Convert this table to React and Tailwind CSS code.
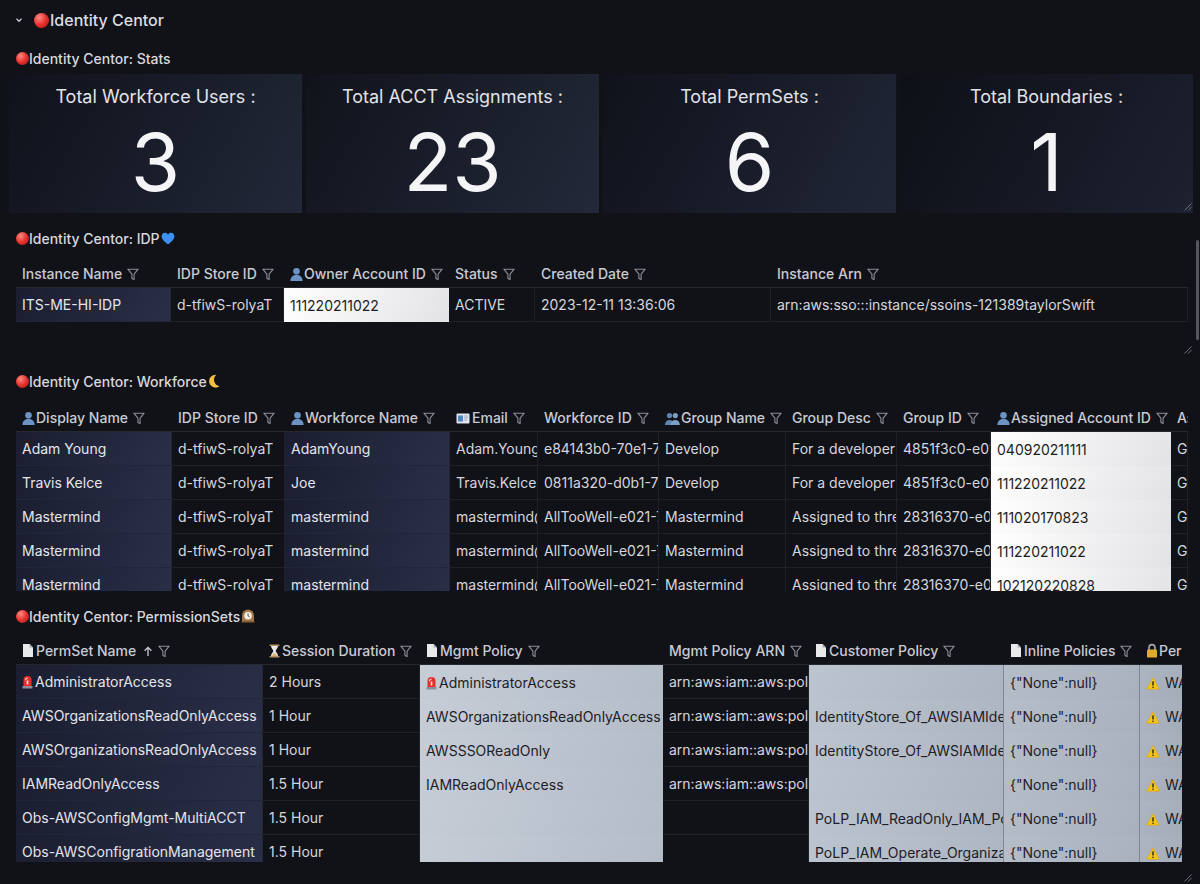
import React from "react";

const tone = {
  dark: "text-[#d5d6de] border-r border-b border-[#1f2127]",
  navy: "bg-linear-120 from-[#1b1e30] to-[#2a2f48] text-[#e4e5eb] border-r border-b border-[#22263a]",
  white: "bg-linear-120 from-[#ffffff] to-[#e3e3e6] text-[#1c1d21]",
  grayA: "bg-linear-120 from-[#c6cdd7] to-[#b4bcc8] text-[#1f2025]",
  grayB: "bg-linear-120 from-[#bcc4cf] to-[#adb5c2] text-[#1f2025] border-r border-[#7f8794]",
  grayC: "bg-linear-120 from-[#b5bdc9] to-[#a9b1be] text-[#1f2025] border-r border-[#7f8794]",
  grayD: "bg-linear-120 from-[#adb5c1] to-[#a3acb9] text-[#1f2025]",
};

function RedDot({ size = "w-[13px] h-[13px]" }) {
  return (
    <span
      className={
        size +
        " inline-block shrink-0 rounded-full bg-radial-[at_35%_30%] from-[#ff8a80] via-[#e5322d] to-[#a3100f]"
      }
    />
  );
}

function Funnel() {
  return (
    <svg width="12" height="13" viewBox="0 0 12 13" className="inline-block ml-[5px] align-[-2px]">
      <path
        d="M0.8 1.2h10.4L7.1 6.2v5.4L4.9 10.5V6.2z"
        fill="none"
        stroke="#8c8d98"
        strokeWidth="1.1"
        strokeLinejoin="round"
      />
    </svg>
  );
}

function Person({ c = "#6b93c4" }) {
  return (
    <svg width="13" height="14" viewBox="0 0 13 14" className="inline-block mr-[1px] align-[-2px]">
      <circle cx="6.5" cy="4.2" r="3.3" fill={c} />
      <path d="M0.4 14c0-3.9 2.7-6.2 6.1-6.2s6.1 2.3 6.1 6.2z" fill={c} />
    </svg>
  );
}

function People() {
  return (
    <svg width="15" height="13" viewBox="0 0 15 13" className="inline-block mr-[1px] align-[-2px]">
      <circle cx="4.5" cy="3.6" r="2.6" fill="#5d86b3" />
      <path d="M0 13c0-3.2 2-5 4.5-5S9 9.8 9 13z" fill="#5d86b3" />
      <circle cx="10.3" cy="3.6" r="2.6" fill="#7aa0c8" />
      <path d="M5.8 13c0-3.2 2-5 4.5-5s4.5 1.8 4.5 5z" fill="#7aa0c8" />
    </svg>
  );
}

function Mail() {
  return (
    <svg width="14" height="11" viewBox="0 0 14 11" className="inline-block mr-[2px] align-[-1px]">
      <rect x="0.5" y="0.5" width="13" height="10" rx="1" fill="#dfe6ee" />
      <rect x="2" y="2.5" width="5" height="6" fill="#4f86c6" />
      <path d="M8 3h4M8 5h4M8 7h3" stroke="#8c9bb0" strokeWidth="0.8" />
    </svg>
  );
}

function Doc() {
  return (
    <svg width="12" height="15" viewBox="0 0 12 15" className="inline-block mr-[2px] align-[-2px]">
      <path d="M1 1h6.6L11 4.4V14H1z" fill="#e9e9ec" />
      <path d="M7.6 1v3.4H11z" fill="#a9a9b0" />
    </svg>
  );
}

function Hourglass() {
  return (
    <svg width="11" height="14" viewBox="0 0 11 14" className="inline-block mr-[2px] align-[-2px]">
      <rect x="0.5" y="0.5" width="10" height="1.6" rx="0.5" fill="#b49060" />
      <rect x="0.5" y="11.9" width="10" height="1.6" rx="0.5" fill="#b49060" />
      <path d="M2 2.1h7c0 2.4-2.3 3.6-2.3 4.9S9 9.5 9 11.9H2c0-2.4 2.3-3.6 2.3-4.9S2 4.5 2 2.1z" fill="#e8e8ea" />
      <path d="M3.2 11.9c0-1.4 1.4-2.4 2.3-2.9.9.5 2.3 1.5 2.3 2.9z" fill="#d9b36a" />
    </svg>
  );
}

function Siren() {
  return (
    <svg width="11" height="14" viewBox="0 0 11 14" className="inline-block mr-[2px] align-[-2px]">
      <rect x="0.5" y="11" width="10" height="2.6" rx="0.6" fill="#8a8f99" />
      <path d="M1.5 11V5a4 4 0 0 1 8 0v6z" fill="#e0312b" />
      <path d="M3.5 5.2a2 2 0 0 1 2-2" stroke="#ffd0cc" strokeWidth="1.2" fill="none" />
      <rect x="4.7" y="5.5" width="1.6" height="4" fill="#ffe3e0" />
    </svg>
  );
}

function Warn() {
  return (
    <svg width="14" height="13" viewBox="0 0 14 13" className="inline-block mr-[5px] align-[-2px]">
      <path d="M7 0.8L13.4 12.2H0.6z" fill="#f6c417" stroke="#d9a50c" strokeWidth="0.6" strokeLinejoin="round" />
      <rect x="6.3" y="4.2" width="1.4" height="4.4" rx="0.6" fill="#222" />
      <circle cx="7" cy="10.3" r="0.8" fill="#222" />
    </svg>
  );
}

function Lock() {
  return (
    <svg width="12" height="15" viewBox="0 0 12 15" className="inline-block mr-[1px] align-[-2px]">
      <path d="M3 7V4.6a3 3 0 0 1 6 0V7" fill="none" stroke="#a7a9b0" strokeWidth="1.6" />
      <rect x="1" y="6.6" width="10" height="8" rx="1.2" fill="#e0aa2a" />
    </svg>
  );
}

function Heart() {
  return (
    <svg width="14" height="13" viewBox="0 0 14 13" className="inline-block ml-[1px] align-[-2px]">
      <path d="M7 12.4C2.8 9.2 0.6 7 0.6 4.2 0.6 2.2 2.1 0.7 4 0.7c1.3 0 2.3.7 3 1.7.7-1 1.7-1.7 3-1.7 1.9 0 3.4 1.5 3.4 3.5 0 2.8-2.2 5-6.4 8.2z" fill="#3d8ff0" />
    </svg>
  );
}

function Moon() {
  return (
    <svg width="12" height="14" viewBox="0 0 12 14" className="inline-block ml-[1px] align-[-2px]">
      <path d="M8.2 0.8a6.4 6.4 0 1 0 3.3 11.4A6.6 6.6 0 0 1 8.2 0.8z" fill="#f3c03f" />
    </svg>
  );
}

function Clock() {
  return (
    <svg width="14" height="14" viewBox="0 0 14 14" className="inline-block ml-[1px] align-[-2px]">
      <path d="M1 13V6.5a6 6 0 0 1 12 0V13z" fill="#a5784a" />
      <circle cx="7" cy="6.8" r="3.8" fill="#f3efe6" />
      <path d="M7 4.5v2.4l1.6 1" stroke="#333" strokeWidth="0.8" fill="none" />
      <rect x="0.5" y="12" width="13" height="1.6" fill="#7d5733" />
    </svg>
  );
}

function SortUp() {
  return (
    <svg width="10" height="11" viewBox="0 0 10 11" className="inline-block ml-[7px] align-[-1px]">
      <path d="M5 10V1.5M1.6 4.8L5 1.4l3.4 3.4" fill="none" stroke="#c9cad3" strokeWidth="1.3" />
    </svg>
  );
}

function Resize({ className }) {
  return (
    <svg width="10" height="10" viewBox="0 0 10 10" className={"absolute " + className}>
      <path d="M9.5 2.5L2.5 9.5M9.5 6L6 9.5" stroke="#6d6e77" strokeWidth="1" />
    </svg>
  );
}

function PanelTitle({ children, extra }) {
  return (
    <div className="h-5 flex items-center pl-4 text-[14px] font-medium text-[#d7d8df]">
      <RedDot />
      <span>{children}</span>
      {extra}
    </div>
  );
}

function DataTable({ cols, rows, width, height }) {
  return (
    <div className={"pl-4 overflow-hidden " + height}>
      <table className={"table-fixed border-separate border-spacing-0 text-[14px] " + width}>
        <colgroup>
          {cols.map((c, i) => (
            <col key={i} className={c.w} />
          ))}
        </colgroup>
        <thead>
          <tr>
            {cols.map((c, i) => (
              <th
                key={i}
                className="h-[28px] px-[6px] text-left font-medium text-[#c9cad3] whitespace-nowrap overflow-hidden border-b border-[#26282e]"
              >
                {c.icon}
                {c.label}
                {c.sort && <SortUp />}
                {c.filter !== false && <Funnel />}
              </th>
            ))}
          </tr>
        </thead>
        <tbody>
          {rows.map((r, ri) => (
            <tr key={ri}>
              {r.map((v, ci) => (
                <td
                  key={ci}
                  className={"h-[34px] px-[6px] whitespace-nowrap overflow-hidden " + tone[cols[ci].tone]}
                >
                  {v}
                </td>
              ))}
            </tr>
          ))}
        </tbody>
      </table>
    </div>
  );
}

const stats = [
  { label: "Total Workforce Users :", value: "3", bg: "from-[#10121b] to-[#222838]" },
  { label: "Total ACCT Assignments :", value: "23", bg: "from-[#11131c] to-[#232939]" },
  { label: "Total PermSets :", value: "6", bg: "from-[#10121b] to-[#212637]" },
  { label: "Total Boundaries :", value: "1", bg: "from-[#0e1017] to-[#1d2130]" },
];

const idpCols = [
  { label: "Instance Name", w: "w-[155px]", tone: "navy" },
  { label: "IDP Store ID", w: "w-[113px]", tone: "dark" },
  { label: "Owner Account ID", icon: <Person />, w: "w-[165px]", tone: "white" },
  { label: "Status", w: "w-[86px]", tone: "dark" },
  { label: "Created Date", w: "w-[236px]", tone: "dark" },
  { label: "Instance Arn", w: "w-[417px]", tone: "dark" },
];

const idpRows = [
  [
    "ITS-ME-HI-IDP",
    "d-tfiwS-rolyaT",
    "111220211022",
    "ACTIVE",
    "2023-12-11 13:36:06",
    "arn:aws:sso:::instance/ssoins-121389taylorSwift",
  ],
];

const wfCols = [
  { label: "Display Name", icon: <Person />, w: "w-[156px]", tone: "navy" },
  { label: "IDP Store ID", w: "w-[113px]", tone: "dark" },
  { label: "Workforce Name", icon: <Person />, w: "w-[165px]", tone: "navy" },
  { label: "Email", icon: <Mail />, w: "w-[88px]", tone: "dark" },
  { label: "Workforce ID", w: "w-[121px]", tone: "dark" },
  { label: "Group Name", icon: <People />, w: "w-[127px]", tone: "dark" },
  { label: "Group Desc", w: "w-[111px]", tone: "dark" },
  { label: "Group ID", w: "w-[94px]", tone: "dark" },
  { label: "Assigned Account ID", icon: <Person />, w: "w-[180px]", tone: "white" },
  { label: "Assignment Type", w: "w-[17px]", tone: "dark", filter: false },
];

const wfRows = [
  ["Adam Young", "d-tfiwS-rolyaT", "AdamYoung", "Adam.Young@taylornation.com", "e84143b0-70e1-7011-a1b2-9c3d", "Develop", "For a developer", "4851f3c0-e011-70c2-88aa", "040920211111", "GROUP"],
  ["Travis Kelce", "d-tfiwS-rolyaT", "Joe", "Travis.Kelce@taylornation.com", "0811a320-d0b1-7055-b7c1-21ff", "Develop", "For a developer", "4851f3c0-e011-70c2-88aa", "111220211022", "GROUP"],
  ["Mastermind", "d-tfiwS-rolyaT", "mastermind", "mastermind@taylornation.com", "AllTooWell-e021-7013-10min", "Mastermind", "Assigned to three accounts", "28316370-e0f1-7098-a6e4", "111020170823", "GROUP"],
  ["Mastermind", "d-tfiwS-rolyaT", "mastermind", "mastermind@taylornation.com", "AllTooWell-e021-7013-10min", "Mastermind", "Assigned to three accounts", "28316370-e0f1-7098-a6e4", "111220211022", "GROUP"],
  ["Mastermind", "d-tfiwS-rolyaT", "mastermind", "mastermind@taylornation.com", "AllTooWell-e021-7013-10min", "Mastermind", "Assigned to three accounts", "28316370-e0f1-7098-a6e4", "102120220828", "GROUP"],
];

const psCols = [
  { label: "PermSet Name", icon: <Doc />, sort: true, w: "w-[247px]", tone: "navy" },
  { label: "Session Duration", icon: <Hourglass />, w: "w-[157px]", tone: "dark" },
  { label: "Mgmt Policy", icon: <Doc />, w: "w-[243px]", tone: "grayA" },
  { label: "Mgmt Policy ARN", w: "w-[146px]", tone: "dark" },
  { label: "Customer Policy", icon: <Doc />, w: "w-[195px]", tone: "grayB" },
  { label: "Inline Policies", icon: <Doc />, w: "w-[136px]", tone: "grayC" },
  { label: "Permissions Boundary", icon: <Lock />, w: "w-[42px]", tone: "grayD" },
];

const warn = (
  <>
    <Warn />
    WARNING: No Boundary
  </>
);
const none = '{"None":null}';
const arn = "arn:aws:iam::aws:policy/";

const psRows = [
  [<><Siren />AdministratorAccess</>, "2 Hours", <><Siren />AdministratorAccess</>, arn + "AdministratorAccess", "", none, warn],
  ["AWSOrganizationsReadOnlyAccess", "1 Hour", "AWSOrganizationsReadOnlyAccess", arn + "AWSOrganizationsReadOnlyAccess", "IdentityStore_Of_AWSIAMIdentityCenter", none, warn],
  ["AWSOrganizationsReadOnlyAccess", "1 Hour", "AWSSSOReadOnly", arn + "AWSSSOReadOnly", "IdentityStore_Of_AWSIAMIdentityCenter", none, warn],
  ["IAMReadOnlyAccess", "1.5 Hour", "IAMReadOnlyAccess", arn + "IAMReadOnlyAccess", "", none, warn],
  ["Obs-AWSConfigMgmt-MultiACCT", "1.5 Hour", "", "", "PoLP_IAM_ReadOnly_IAM_Policy", none, warn],
  ["Obs-AWSConfigrationManagement", "1.5 Hour", "", "", "PoLP_IAM_Operate_Organizations", none, warn],
];

export default function App() {
  return (
    <div className="relative min-h-[884px] bg-[#111217] font-[Inter,'Noto_Sans',sans-serif] text-[#d5d6de] overflow-hidden">
      {/* row header */}
      <div className="h-10 flex items-center pl-[14px]">
        <svg width="10" height="10" viewBox="0 0 10 10" className="mr-[10px]">
          <path d="M2.5 3.8L5 6.3l2.5-2.5" fill="none" stroke="#c9cad3" strokeWidth="1.3" />
        </svg>
        <RedDot size="w-[15px] h-[15px]" />
        <span className="text-[16px] font-medium text-[#dcdde3] ml-[1px]">Identity Centor</span>
      </div>

      {/* stats */}
      <div className="mt-2">
        <PanelTitle>Identity Centor: Stats</PanelTitle>
        <div className="relative mt-[6px] pl-[9px] pr-[7px] grid grid-cols-4 gap-[4px] h-[139px]">
          {stats.map((s) => (
            <div key={s.label} className={"flex flex-col items-center bg-linear-120 " + s.bg}>
              <div className="mt-[9px] text-[18px] text-[#e2e3e8]">{s.label}</div>
              <div className="mt-[12px] text-[80px] leading-none text-[#f5f5f7]">{s.value}</div>
            </div>
          ))}
          <Resize className="right-[8px] bottom-[2px]" />
        </div>
      </div>

      {/* IDP */}
      <div className="relative mt-[15px] h-[128px]">
        <PanelTitle extra={<Heart />}>Identity Centor: IDP</PanelTitle>
        <div className="mt-3">
          <DataTable cols={idpCols} rows={idpRows} width="w-[1172px]" height="h-[62px]" />
        </div>
        <Resize className="right-[8px] bottom-[2px]" />
      </div>

      {/* Workforce */}
      <div className="mt-[15px]">
        <PanelTitle extra={<Moon />}>Identity Centor: Workforce</PanelTitle>
        <div className="mt-[13px] w-[1188px]">
          <DataTable cols={wfCols} rows={wfRows} width="w-[1172px]" height="h-[187px]" />
        </div>
      </div>

      {/* Permission sets */}
      <div className="relative mt-[15px] pb-[22px]">
        <PanelTitle extra={<Clock />}>Identity Centor: PermissionSets</PanelTitle>
        <div className="mt-[11px] w-[1182px]">
          <DataTable cols={psCols} rows={psRows} width="w-[1166px]" height="h-[225px]" />
        </div>
        <Resize className="right-[8px] bottom-[2px]" />
      </div>

      {/* page scrollbar */}
      <div className="absolute right-[1px] top-[240px] w-[3px] h-[100px] rounded-full bg-[#55565d]" />
    </div>
  );
}
